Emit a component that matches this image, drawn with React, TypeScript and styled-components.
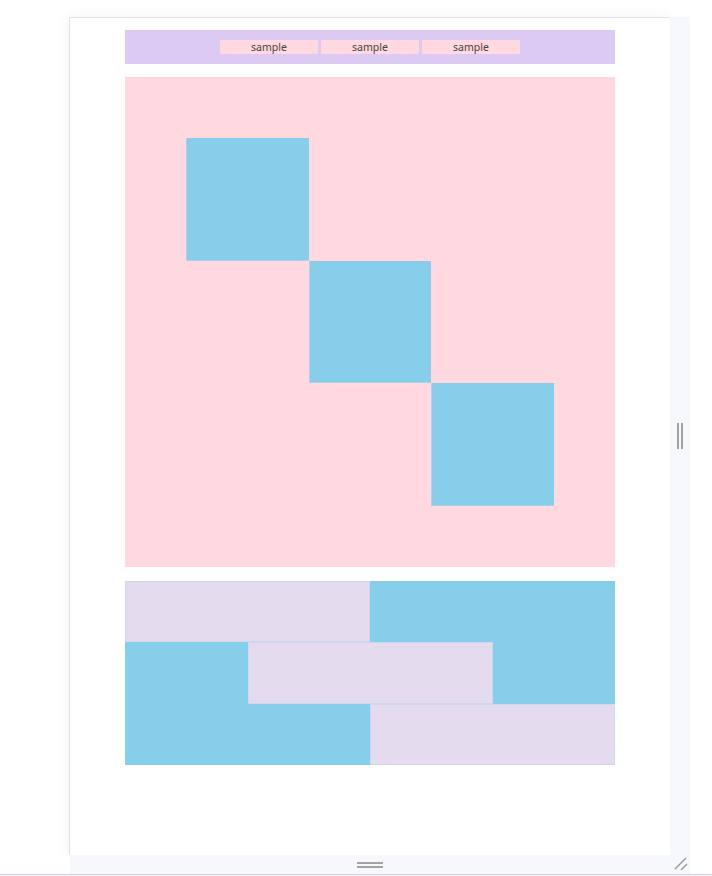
import React from 'react';
import styled, { createGlobalStyle } from 'styled-components';

const GlobalStyle = createGlobalStyle`
  html, body {
    margin: 0;
    padding: 0;
    background: #ffffff;
  }
  body {
    font-family: "Noto Sans", "Open Sans", sans-serif;
  }
`;

const Page = styled.div`
  height: 875px;
  border-bottom: 1px solid #c9cbe6;
  padding: 17px 0 0 69px;
  box-sizing: border-box;
`;

const Frame = styled.div`
  display: grid;
  grid-template-columns: 601px 20px;
  grid-template-rows: 838px 19px;
`;

const Panel = styled.div`
  background: #ffffff;
  border-top: 1px solid #e1e1e1;
  border-left: 1px solid #e1e1e1;
  box-shadow: 0 0 14px rgba(0, 0, 0, 0.05);
  padding-top: 12px;
  box-sizing: border-box;
`;

const Content = styled.div`
  width: 490px;
  margin: 0 auto;
`;

const Toolbar = styled.div`
  height: 34px;
  background: #dccaf3;
  display: flex;
  align-items: center;
  justify-content: center;
  gap: 3px;
`;

const SampleButton = styled.button`
  width: 98px;
  height: 14px;
  padding: 0;
  border: none;
  background: #ffd8e0;
  color: #444444;
  font-family: "Noto Sans", "Open Sans", sans-serif;
  font-size: 10.5px;
  line-height: 14px;
`;

const Board = styled.div`
  margin-top: 13px;
  width: 490px;
  height: 490px;
  background: #ffd8e0;
  display: grid;
  grid-template-columns: repeat(8, 1fr);
  grid-template-rows: repeat(8, 1fr);
`;

const Square = styled.div<{ step: number }>`
  grid-column: ${p => p.step * 2 + 2} / span 2;
  grid-row: ${p => p.step * 2 + 2} / span 2;
  background: #87ceeb;
  border-left: 1px solid #a8d3ea;
  border-bottom: 1px solid #a8d3ea;
`;

const Stripes = styled.div`
  margin-top: 14px;
  width: 490px;
  height: 184px;
  background: #87ceeb;
  display: grid;
  grid-template-columns: repeat(4, 1fr);
  grid-template-rows: repeat(3, 1fr);
`;

const Stripe = styled.div<{ row: number }>`
  grid-row: ${p => p.row + 1};
  grid-column: ${p => p.row + 1} / span 2;
  background: #e5dbef;
  border: 1px solid #cdd6ee;
  box-sizing: border-box;
`;

const SideHandle = styled.div`
  background: #f7f8fc;
  display: flex;
  align-items: center;
  justify-content: center;
  gap: 2px;
`;

const VLine = styled.span`
  width: 2px;
  height: 26px;
  background: #a3a3a3;
`;

const BottomHandle = styled.div`
  margin-left: 1px;
  background: #f7f8fc;
  display: flex;
  flex-direction: column;
  align-items: center;
  justify-content: center;
  gap: 2px;
  padding-top: 1px;
`;

const HLine = styled.span`
  width: 26px;
  height: 2px;
  background: #a3a3a3;
`;

const Corner = styled.div`
  background: #f7f8fc;
  display: flex;
  align-items: center;
  justify-content: center;
`;

const App: React.FC = () => {
  return (
    <>
      <GlobalStyle />
      <Page>
        <Frame>
          <Panel>
            <Content>
              <Toolbar>
                <SampleButton>sample</SampleButton>
                <SampleButton>sample</SampleButton>
                <SampleButton>sample</SampleButton>
              </Toolbar>
              <Board>
                {[0, 1, 2].map(i => (
                  <Square key={i} step={i} />
                ))}
              </Board>
              <Stripes>
                {[0, 1, 2].map(i => (
                  <Stripe key={i} row={i} />
                ))}
              </Stripes>
            </Content>
          </Panel>
          <SideHandle>
            <VLine />
            <VLine />
          </SideHandle>
          <BottomHandle>
            <HLine />
            <HLine />
          </BottomHandle>
          <Corner>
            <svg width="20" height="19" viewBox="0 0 20 19">
              <line x1="16" y1="3" x2="5" y2="14" stroke="#9a9a9a" strokeWidth="1.5" />
              <line x1="17" y1="9" x2="11" y2="15" stroke="#9a9a9a" strokeWidth="1.5" />
            </svg>
          </Corner>
        </Frame>
      </Page>
    </>
  );
};

export default App;
